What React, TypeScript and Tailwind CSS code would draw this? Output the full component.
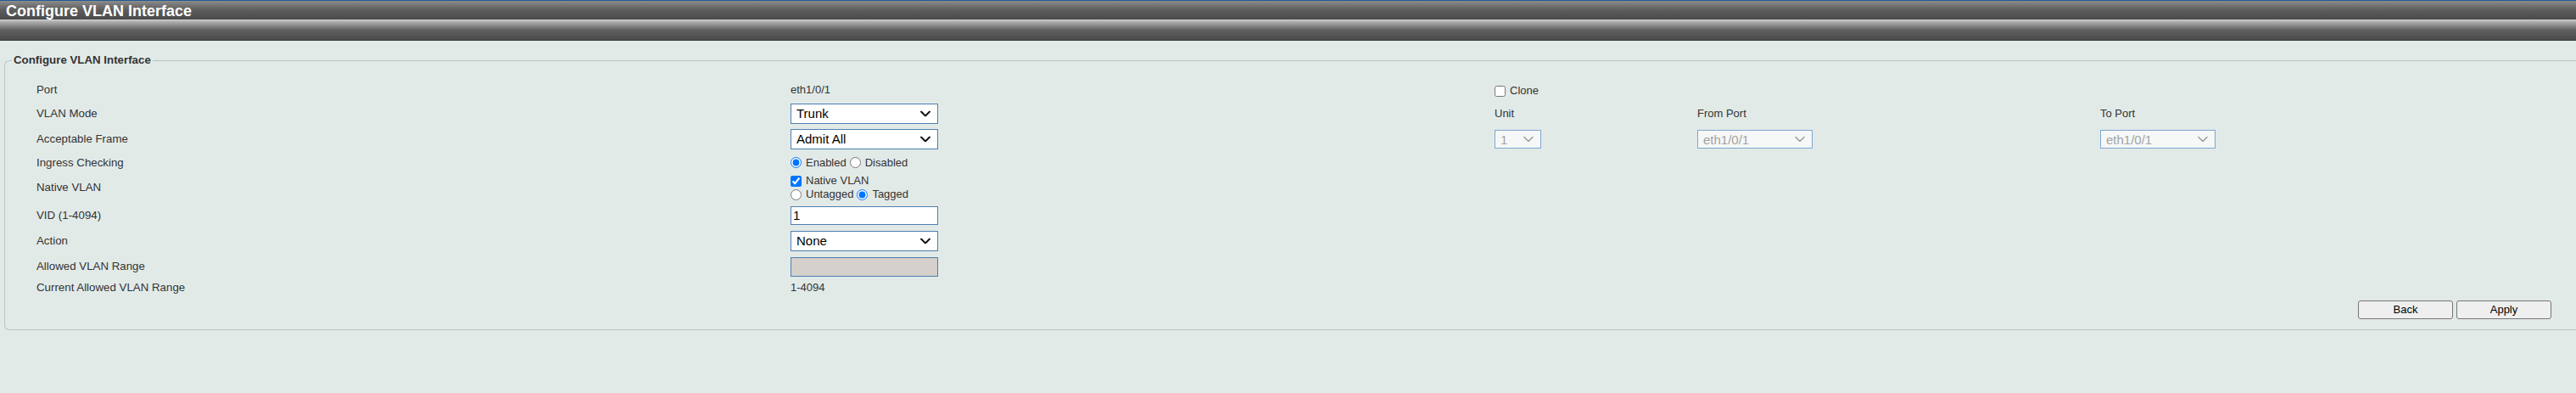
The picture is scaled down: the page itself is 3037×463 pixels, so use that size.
import React from "react";

function Chevron({ disabled }: { disabled?: boolean }) {
  return (
    <svg
      className="pointer-events-none absolute right-[9px] top-1/2 -translate-y-1/2"
      width="12"
      height="7"
      viewBox="0 0 12 7"
    >
      <path
        d="M1 1 L6 6 L11 1"
        fill="none"
        stroke={disabled ? "#9a9a9a" : "#111111"}
        strokeWidth={disabled ? 1.5 : 2}
        strokeLinecap="round"
        strokeLinejoin="round"
      />
    </svg>
  );
}

function Select({ value }: { value: string }) {
  return (
    <div className="relative h-[24px] w-[174px]">
      <select
        defaultValue={value}
        className="h-full w-full appearance-none rounded-none border border-[#4e7fb0] bg-white pl-[6px] text-[15px] text-black outline-none"
      >
        <option>{value}</option>
      </select>
      <Chevron />
    </div>
  );
}

function DisabledSelect({ value, width }: { value: string; width: string }) {
  return (
    <div className={`relative h-[22px] ${width}`}>
      <select
        disabled
        defaultValue={value}
        className="h-full w-full appearance-none rounded-none border border-[#7ea6d0] bg-[#f6f8f8] pl-[6px] text-[15px] text-[#a3a3a3] outline-none"
      >
        <option>{value}</option>
      </select>
      <Chevron disabled />
    </div>
  );
}

function Label({ children }: { children: React.ReactNode }) {
  return <div className="flex items-center text-[13.3px] text-[#333]">{children}</div>;
}

export default function App() {
  return (
    <div className="min-h-[463px] w-full bg-[#e2eae8] font-['Liberation_Sans',Arial,sans-serif]">
      {/* Header bars */}
      <div className="border-t border-[#1f5b97]">
        <div className="h-[22px] bg-gradient-to-b from-[#8c8c8c] via-[#5c5c5c] to-[#4a4a4a] pl-[7px] pt-[2px] text-[18px] font-bold leading-[20px] text-white">
          Configure VLAN Interface
        </div>
        <div className="h-px bg-[#d4d4d4]" />
        <div className="h-[24px] border-b border-[#3d3d3d] bg-gradient-to-b from-[#bdbdbd] via-[#5f5f5f] to-[#4b4b4b]" />
      </div>

      <fieldset className="ml-[5px] mt-[15px] rounded-l-[6px] border border-r-0 border-[#b8c4c4] pb-[12px] pl-[8px] pr-[29px] pt-[13px]">
        <legend className="px-[2px] text-[13.3px] font-bold leading-[16px] text-[#333]">
          Configure VLAN Interface
        </legend>

        <div className="ml-[29px] grid grid-cols-[889px_830px_239px_475px_1fr] grid-rows-[27px_29px_32px_23px_36px_30px_30px_30px_20px]">
          {/* Row 1: Port */}
          <Label>Port</Label>
          <div className="flex items-center text-[13px] text-[#333]">eth1/0/1</div>
          <div className="flex items-center gap-[5px] pt-[3px] text-[13px] text-[#333]">
            <input type="checkbox" className="m-0 h-[13px] w-[13px]" />
            <span>Clone</span>
          </div>
          <div />
          <div />

          {/* Row 2: VLAN Mode */}
          <Label>VLAN Mode</Label>
          <div className="flex items-center">
            <Select value="Trunk" />
          </div>
          <div className="flex items-center text-[13px] text-[#333]">Unit</div>
          <div className="flex items-center text-[13px] text-[#333]">From Port</div>
          <div className="flex items-center text-[13px] text-[#333]">To Port</div>

          {/* Row 3: Acceptable Frame */}
          <Label>Acceptable Frame</Label>
          <div className="flex items-center">
            <Select value="Admit All" />
          </div>
          <div className="flex items-center">
            <DisabledSelect value="1" width="w-[55px]" />
          </div>
          <div className="flex items-center">
            <DisabledSelect value="eth1/0/1" width="w-[136px]" />
          </div>
          <div className="flex items-center">
            <DisabledSelect value="eth1/0/1" width="w-[136px]" />
          </div>

          {/* Row 4: Ingress Checking */}
          <Label>Ingress Checking</Label>
          <div className="flex items-center text-[13px] text-[#333]">
            <input type="radio" name="ingress" defaultChecked className="m-0 h-[13px] w-[13px]" />
            <span className="ml-[5px]">Enabled</span>
            <input type="radio" name="ingress" className="ml-[4px] h-[13px] w-[13px]" />
            <span className="ml-[5px]">Disabled</span>
          </div>
          <div className="col-span-3" />

          {/* Row 5: Native VLAN */}
          <Label>Native VLAN</Label>
          <div className="flex flex-col justify-center text-[13px] text-[#333]">
            <div className="flex h-[16px] items-center">
              <input type="checkbox" defaultChecked className="m-0 h-[13px] w-[13px]" />
              <span className="ml-[5px]">Native VLAN</span>
            </div>
            <div className="flex h-[16px] items-center">
              <input type="radio" name="native" className="m-0 h-[13px] w-[13px]" />
              <span className="ml-[5px]">Untagged</span>
              <input type="radio" name="native" defaultChecked className="ml-[4px] h-[13px] w-[13px]" />
              <span className="ml-[5px]">Tagged</span>
            </div>
          </div>
          <div className="col-span-3" />

          {/* Row 6: VID */}
          <Label>VID (1-4094)</Label>
          <div className="flex items-center">
            <input
              type="text"
              defaultValue="1"
              className="h-[22px] w-[174px] border border-[#4e7fb0] bg-white px-[2px] text-[15px] text-black outline-none"
            />
          </div>
          <div className="col-span-3" />

          {/* Row 7: Action */}
          <Label>Action</Label>
          <div className="flex items-center">
            <Select value="None" />
          </div>
          <div className="col-span-3" />

          {/* Row 8: Allowed VLAN Range */}
          <Label>Allowed VLAN Range</Label>
          <div className="flex items-center">
            <input
              type="text"
              disabled
              className="h-[23px] w-[174px] border border-[#4e7fb0] bg-[#d5d0cb] px-[2px] text-[15px] outline-none"
            />
          </div>
          <div className="col-span-3" />

          {/* Row 9: Current Allowed VLAN Range */}
          <Label>Current Allowed VLAN Range</Label>
          <div className="flex items-center text-[13px] text-[#333]">1-4094</div>
          <div className="col-span-3" />
        </div>

        <div className="mt-[5px] flex justify-end gap-[4px]">
          <button className="h-[22px] w-[112px] rounded-[3px] border border-[#767676] bg-[#efefef] text-[13px] text-black">
            Back
          </button>
          <button className="h-[22px] w-[112px] rounded-[3px] border border-[#767676] bg-[#efefef] text-[13px] text-black">
            Apply
          </button>
        </div>
      </fieldset>
    </div>
  );
}
